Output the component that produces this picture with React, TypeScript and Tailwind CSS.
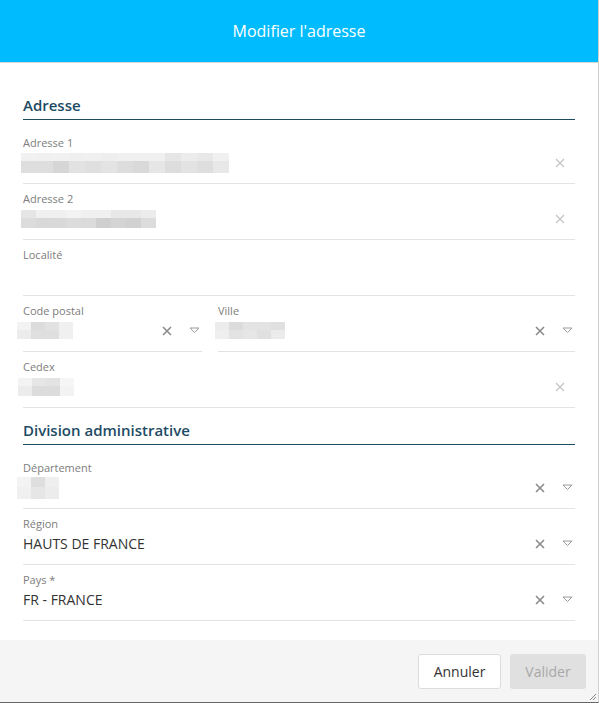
import React from "react";

const FONT = { fontFamily: '"Open Sans", "Liberation Sans", sans-serif' };

type Tiles = { w: number; top: string[]; bottom: string[]; topH: number; botH: number };

function Blur({ w, top, bottom, topH, botH }: Tiles) {
  return (
    <div className="flex flex-col">
      <div className="flex">
        {top.map((c, i) => (
          <div key={i} style={{ width: w, height: topH, background: c }} />
        ))}
      </div>
      <div className="flex">
        {bottom.map((c, i) => (
          <div key={i} style={{ width: w, height: botH, background: c }} />
        ))}
      </div>
    </div>
  );
}

function ClearLight() {
  return (
    <svg width="10" height="10" viewBox="0 0 10 10" className="shrink-0">
      <path d="M1 1 L9 9 M9 1 L1 9" stroke="#c4c4c4" strokeWidth="1.2" />
    </svg>
  );
}

function ClearDark() {
  return (
    <svg width="10" height="10" viewBox="0 0 10 10" className="shrink-0">
      <path d="M1 1 L9 9 M9 1 L1 9" stroke="#8a8a8a" strokeWidth="1.6" />
    </svg>
  );
}

function Caret() {
  return (
    <svg width="11" height="7" viewBox="0 0 11 7" className="shrink-0">
      <path d="M1 1 L10 1 L5.5 5.5 Z" fill="none" stroke="#9a9a9a" strokeWidth="1" strokeLinejoin="round" />
    </svg>
  );
}

function Field({
  label,
  children,
  kind = "text",
  className = "",
}: {
  label: string;
  children?: React.ReactNode;
  kind?: "text" | "select" | "none";
  className?: string;
}) {
  return (
    <div className={`flex h-[56px] flex-col border-b border-[#e3e3e3] pt-[8px] ${className}`}>
      <div className="text-[11px] leading-[14px] text-[#7d7d7d]">{label}</div>
      <div className="flex h-[25px] items-center">
        <div className="min-w-0 flex-1 text-[14px] text-[#333]">{children}</div>
        {kind === "text" && (
          <div className="mr-[10px] flex items-center">
            <ClearLight />
          </div>
        )}
        {kind === "select" && (
          <div className="flex items-center gap-[17px] pr-[2px]">
            <ClearDark />
            <Caret />
          </div>
        )}
      </div>
    </div>
  );
}

function Section({ title, className = "" }: { title: string; className?: string }) {
  return (
    <div
      className={`border-b border-[#1d4b64] pb-[4px] text-[15px] font-semibold leading-[20px] text-[#1d4b64] ${className}`}
    >
      {title}
    </div>
  );
}

export default function App() {
  return (
    <div className="h-[703px] w-[599px] bg-white" style={FONT}>
      <div className="flex h-[703px] w-[599px] flex-col border-r border-b border-r-[#d0d0d0] border-b-[#666] bg-white">
        <div className="flex h-[63px] items-center justify-center border-b border-[#d6d6d6] bg-[#00bcff] text-[16px] text-white">
          Modifier l'adresse
        </div>

        <div className="flex flex-1 flex-col pr-[23px] pl-[23px]">
          <Section title="Adresse" className="mt-[32px]" />
          <Field label="Adresse 1" className="mt-[8px]">
            <div className="-ml-[2px]">
              <Blur
                w={16}
                topH={8}
                botH={12}
                top={["#f1f1f1", "#f0f0f0", "#f1f1f1", "#efefef", "#f0f0f0", "#eeeeee", "#f0f0f0", "#f0f0f0", "#f0f0f0", "#e6e6e6", "#ececec", "#e8e8e8", "#f0f0f0"]}
                bottom={["#dedede", "#dedede", "#d6d6d6", "#e2e2e2", "#dfdfdf", "#e3e3e3", "#dddddd", "#d9d9d9", "#e6e6e6", "#dddddd", "#e3e3e3", "#dedede", "#e8e8e8"]}
              />
            </div>
          </Field>
          <Field label="Adresse 2">
            <div className="-ml-[2px]">
              <Blur
                w={15}
                topH={8}
                botH={10}
                top={["#e5e5e5", "#f0f0f0", "#f0f0f0", "#f3f3f3", "#f0f0f0", "#f0f0f0", "#e8e8e8", "#e8e8e8", "#ececec"]}
                bottom={["#dcdcdc", "#d8d8d8", "#d9d9d9", "#dcdcdc", "#dbdbdb", "#cfcfcf", "#d4d4d4", "#d1d1d1", "#dcdcdc"]}
              />
            </div>
          </Field>
          <Field label="Localité" kind="none" />
          <div className="flex gap-[16px]">
            <Field label="Code postal" kind="select" className="w-[179px]">
              <div className="-ml-[6px]">
                <Blur
                  w={14}
                  topH={8}
                  botH={9}
                  top={["#f3f3f3", "#dcdcdc", "#e2e2e2", "#f0f0f0"]}
                  bottom={["#ececec", "#dfdfdf", "#dfdfdf", "#f0f0f0"]}
                />
              </div>
            </Field>
            <Field label="Ville" kind="select" className="flex-1">
              <div className="-ml-[3px]">
                <Blur
                  w={14}
                  topH={8}
                  botH={9}
                  top={["#ececec", "#dcdcdc", "#e3e3e3", "#e3e3e3", "#e0e0e0"]}
                  bottom={["#efefef", "#e3e3e3", "#e6e6e6", "#e0e0e0", "#ebebeb"]}
                />
              </div>
            </Field>
          </div>
          <Field label="Cedex">
            <div className="-ml-[5px]">
              <Blur
                w={14}
                topH={8}
                botH={10}
                top={["#f3f3f3", "#e6e6e6", "#e3e3e3", "#f6f6f6"]}
                bottom={["#ececec", "#dcdcdc", "#dcdcdc", "#f3f3f3"]}
              />
            </div>
          </Field>

          <Section title="Division administrative" className="mt-[12px]" />
          <Field label="Département" kind="select" className="mt-[8px]">
            <div className="-ml-[6px]">
              <Blur
                w={14}
                topH={10}
                botH={12}
                top={["#f3f3f3", "#dedede", "#efefef"]}
                bottom={["#f0f0f0", "#e6e6e6", "#ececec"]}
              />
            </div>
          </Field>
          <Field label="Région" kind="select">
            HAUTS DE FRANCE
          </Field>
          <Field label="Pays *" kind="select">
            FR - FRANCE
          </Field>
        </div>

        <div className="relative flex h-[62px] items-center justify-end gap-[9px] bg-[#f5f5f5] pr-[12px]">
          <button className="h-[35px] w-[83px] rounded-[3px] border border-[#dcdcdc] bg-white text-[14px] text-[#333]">
            Annuler
          </button>
          <button className="h-[35px] w-[76px] rounded-[3px] bg-[#e0e0e0] text-[14px] text-[#a8a8a8]">
            Valider
          </button>
          <svg width="8" height="8" viewBox="0 0 8 8" className="absolute right-[1px] bottom-[1px]">
            <path d="M7 1 L1 7 M7 4 L4 7" stroke="#888" strokeWidth="1" />
          </svg>
        </div>
      </div>
    </div>
  );
}
